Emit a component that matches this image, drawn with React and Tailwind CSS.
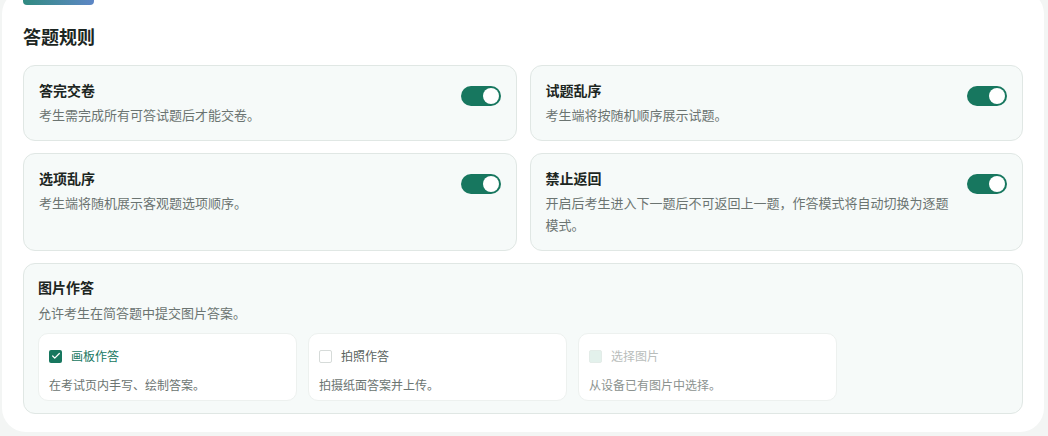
import { Check } from "lucide-react";

const rules = [
  { title: "答完交卷", desc: "考生需完成所有可答试题后才能交卷。" },
  { title: "试题乱序", desc: "考生端将按随机顺序展示试题。" },
  { title: "选项乱序", desc: "考生端将随机展示客观题选项顺序。" },
  { title: "禁止返回", desc: "开启后考生进入下一题后不可返回上一题，作答模式将自动切换为逐题模式。" },
];

const modes = [
  { label: "画板作答", desc: "在考试页内手写、绘制答案。", state: "checked" },
  { label: "拍照作答", desc: "拍摄纸面答案并上传。", state: "off" },
  { label: "选择图片", desc: "从设备已有图片中选择。", state: "disabled" },
];

function Toggle() {
  return (
    <div className="w-[40px] h-[20px] shrink-0 rounded-full bg-[#17775f] flex items-center justify-end pr-[2px] mt-[6px]">
      <div className="w-[16px] h-[16px] rounded-full bg-white" />
    </div>
  );
}

function Box({ state }) {
  if (state === "checked")
    return (
      <span className="w-[13px] h-[13px] rounded-[2px] bg-[#17775f] flex items-center justify-center">
        <Check size={10} strokeWidth={3} className="text-white" />
      </span>
    );
  if (state === "disabled")
    return <span className="w-[13px] h-[13px] rounded-[2px] bg-[#e3f1ec] border border-[#e3ece8]" />;
  return <span className="w-[13px] h-[13px] rounded-[2px] bg-white border border-[#d6dbd9]" />;
}

export default function App() {
  return (
    <div
      className="h-[436px] overflow-hidden bg-[#f3f5f4] pl-[2px] pr-[4px]"
      style={{ fontFamily: '"Noto Sans CJK SC", "Noto Sans", sans-serif' }}
    >
      <div className="-mt-[10px] h-[442px] rounded-[24px] bg-white px-[21px]">
        <div className="w-[71px] h-[15px] rounded-b-[4px] bg-gradient-to-r from-[#2f8a80] to-[#5d86c6]" />

        <h2 className="mt-[19px] text-[18px] leading-[24px] font-bold text-[#1c2622]">答题规则</h2>

        <div className="mt-[17px] grid grid-cols-2 gap-x-[13px] gap-y-[12px]">
          {rules.map((r) => (
            <div
              key={r.title}
              className="flex items-start justify-between gap-[18px] rounded-[12px] border border-[#e0e7e4] bg-[#f6faf9] pl-[15px] pr-[15px] pt-[14px] pb-[14px]"
            >
              <div className="min-w-0">
                <div className="text-[14px] leading-[21px] font-bold text-[#1c2622]">{r.title}</div>
                <div className="mt-[3px] text-[13px] leading-[22px] text-[#6b7471]">{r.desc}</div>
              </div>
              <Toggle />
            </div>
          ))}
        </div>

        <div className="mt-[12px] rounded-[12px] border border-[#e0e7e4] bg-[#f6faf9] px-[14px] pt-[13px] pb-[12px]">
          <div className="text-[14px] leading-[21px] font-bold text-[#1c2622]">图片作答</div>
          <div className="mt-[4px] text-[13px] leading-[22px] text-[#6b7471]">允许考生在简答题中提交图片答案。</div>
          <div className="mt-[9px] flex gap-[11px]">
            {modes.map((m) => (
              <div
                key={m.label}
                className="w-[259px] h-[68px] rounded-[10px] border border-[#edf1ef] bg-white px-[10px] pt-[13px]"
              >
                <div className="flex items-center gap-[9px]">
                  <Box state={m.state} />
                  <span
                    className={`text-[12px] leading-[18px] ${
                      m.state === "checked"
                        ? "text-[#17775f]"
                        : m.state === "disabled"
                        ? "text-[#b9bdbb]"
                        : "text-[#5b6360]"
                    }`}
                  >
                    {m.label}
                  </span>
                </div>
                <div className={`mt-[11px] text-[12px] leading-[18px] ${m.state === "disabled" ? "text-[#8c9390]" : "text-[#6b7471]"}`}>
                  {m.desc}
                </div>
              </div>
            ))}
          </div>
        </div>
      </div>
    </div>
  );
}
